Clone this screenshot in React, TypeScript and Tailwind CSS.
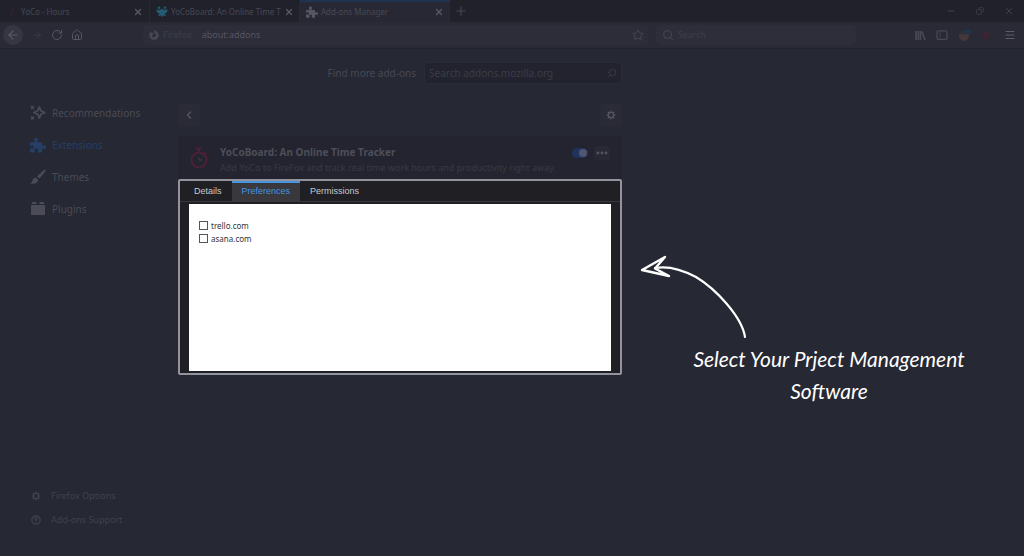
import { useState } from "react";
import type { ReactNode } from "react";
import {
  ArrowLeft,
  ArrowRight,
  ChevronLeft,
  CircleHelp,
  Copy,
  Ellipsis,
  House,
  Menu,
  Minus,
  Plus,
  RotateCw,
  Search,
  Star,
  X,
} from "lucide-react";
import { FaFirefoxBrowser } from "react-icons/fa";

function SparkleIcon() {
  return (
    <svg viewBox="0 0 16 16" className="w-4 h-4" fill="none" stroke="currentColor">
      <path
        d="M9.3 2 L11 5.8 L14.8 7.5 L11 9.2 L9.3 13 L7.6 9.2 L3.8 7.5 L7.6 5.8 Z"
        strokeWidth="1.8"
        strokeLinejoin="round"
      />
      <path d="M1 1l3 3M4 1L1 4M1 11.5l3 3M4 11.5l-3 3" strokeWidth="1.3" />
    </svg>
  );
}

function PuzzleIcon({ className }: { className: string }) {
  return (
    <svg viewBox="0 0 16 16" className={className} fill="currentColor">
      <path d="M1 5.2h3.2c.6 0 .8-.5.5-1C4.3 3.7 4 3.2 4 2.6 4 1.5 4.9.8 6 .8s2 .7 2 1.8c0 .6-.3 1.1-.7 1.6-.3.5-.1 1 .5 1H11a1 1 0 0 1 1 1v1.9c0 .6.5.8 1 .5.4-.3.8-.6 1.3-.6 1 0 1.7.9 1.7 2s-.7 2-1.7 2c-.5 0-.9-.3-1.3-.6-.5-.3-1-.1-1 .5v2.6a1 1 0 0 1-1 1H8.2c-.6 0-.8-.5-.5-1 .3-.4.5-.8.5-1.3 0-1-.9-1.6-1.9-1.6s-1.9.6-1.9 1.6c0 .5.2.9.5 1.3.3.5.1 1-.5 1H1a1 1 0 0 1-1-1v-2.7c0-.6.5-.8 1-.5.4.3.8.5 1.3.5 1 0 1.5-.8 1.5-1.7s-.5-1.7-1.5-1.7c-.5 0-.9.2-1.3.5-.5.3-1 .1-1-.5V6.2a1 1 0 0 1 1-1z" />
    </svg>
  );
}

function BrushIcon() {
  return (
    <svg viewBox="0 0 16 16" className="w-4 h-4" fill="currentColor">
      <path d="M15.3.6c.6.6.4 1.200 0 1.800L9.500 9.600 7.200 7.300 13.800.9c.6-.5 1.100-.7 1.500-.3z" />
      <path d="M5.900 8.600l2.200 2.100c.2 2.600-2.300 4.300-8 4 1.600-.9 2-1.800 2.400-3.300.4-1.700 1.800-2.800 3.400-2.800z" />
    </svg>
  );
}

function PluginIcon() {
  return (
    <svg viewBox="0 0 16 16" className="w-4 h-4" fill="currentColor">
      <path d="M2 1h4.500v2H2zM9.500 1H14v2H9.500zM1.500 4h13a.5.5 0 0 1 .5.5v9a.5.5 0 0 1-.5.5h-13a.5.5 0 0 1-.5-.5v-9a.5.5 0 0 1 .5-.5z" />
    </svg>
  );
}

function GearIcon({ className }: { className: string }) {
  return (
    <svg viewBox="0 0 16 16" className={className} fill="none" stroke="currentColor">
      <circle cx="8" cy="8" r="4.2" strokeWidth="2.2" />
      <path
        d="M8 .8v3M8 12.2v3M.8 8h3M12.2 8h3M2.9 2.9l2.1 2.1M11 11l2.1 2.1M2.9 13.1L5 11M11 5l2.1-2.1"
        strokeWidth="2"
      />
    </svg>
  );
}

function BoardIcon() {
  return (
    <svg viewBox="0 0 12 12" className="w-3 h-3 shrink-0 text-[#235b70]" fill="currentColor">
      <circle cx="3" cy="1.8" r="1.3" />
      <circle cx="9" cy="1.800" r="1.300" />
      <path d="M0 3.500l3 .5L6 3l3 1 3-.5L10.500 7 8.500 7.500 10 10 7 9.500 6 11.500 5 9.500 2 10l1.500-2.500-2-.5z" />
    </svg>
  );
}

function StopwatchIcon() {
  return (
    <svg
      viewBox="0 0 18 22"
      className="w-[18px] h-[22px] shrink-0 text-[#4c2137]"
      fill="none"
      stroke="currentColor"
    >
      <circle cx="9" cy="13" r="7.5" strokeWidth="2" />
      <path d="M6 1.5h6M9 2v3M14.5 5.5l1.5 1.5" strokeWidth="2" />
      <path d="M8 10l2 3.5 2.5-1" stroke="#3d3437" strokeWidth="1.5" />
    </svg>
  );
}

function LibraryIcon() {
  return (
    <svg viewBox="0 0 12 12" className="w-3 h-3" stroke="currentColor" strokeWidth="1.7">
      <path d="M2 2v9M4.3 2v9M6.5 2v9M8 2.5l3 8.5" />
    </svg>
  );
}

function SidebarIcon() {
  return (
    <svg viewBox="0 0 12 12" className="w-3 h-3" fill="none" stroke="currentColor">
      <rect x="1" y="1.8" width="10" height="8.5" rx="1.2" strokeWidth="1.3" />
      <path d="M3 4h2M3 6h2M3 8h2" strokeWidth=".9" />
    </svg>
  );
}

function AvatarIcon() {
  return (
    <svg viewBox="0 0 14 14" className="w-3.5 h-3.5">
      <circle cx="6" cy="8" r="5" fill="#44383a" />
      <path d="M1.5 6.5a4.5 4.5 0 0 1 9 0z" fill="#30323b" />
      <circle cx="10.5" cy="3.5" r="2.8" fill="#1d3551" />
    </svg>
  );
}

function HandArrow() {
  return (
    <svg
      viewBox="0 0 108 84"
      className="w-[108px] h-[84px]"
      fill="none"
      stroke="#fff"
      strokeLinecap="round"
      strokeLinejoin="round"
      aria-hidden="true"
    >
      <path d="M25 2 L2 15 L29 21 L15 13.5 Z" strokeWidth="2.4" />
      <path d="M15 13 C26 11 41 14 56 22 C76 34 102 62 105 82" strokeWidth="2.2" />
    </svg>
  );
}

type TabProps = {
  icon: ReactNode;
  title: string;
  active?: boolean;
};

function BrowserTab({ icon, title, active }: TabProps) {
  return (
    <div
      className={
        active
          ? "flex items-center gap-[3px] w-[150px] h-full px-1.5 border-t-2 border-[#22334f] bg-[#272833]"
          : "flex items-center gap-[3px] w-[150px] h-full px-1.5 border-t-2 border-transparent border-r border-r-[#292a35]"
      }
    >
      {icon}
      <span className="flex-1 whitespace-nowrap text-[8px]">{title}</span>
      <button aria-label={`Close ${title}`}>
        <X className="w-2.5 h-2.5 text-[#5a5b66]" strokeWidth={3} />
      </button>
    </div>
  );
}

const categories = [
  { name: "Recommendations", icon: <SparkleIcon /> },
  { name: "Extensions", icon: <PuzzleIcon className="w-4 h-4" /> },
  { name: "Themes", icon: <BrushIcon /> },
  { name: "Plugins", icon: <PluginIcon /> },
];

const detailTabs = ["Details", "Preferences", "Permissions"];
const sites = ["trello.com", "asana.com"];

function App() {
  const [tab, setTab] = useState("Preferences");
  const [enabled, setEnabled] = useState(true);

  return (
    <div className="flex flex-col min-h-screen bg-[#262833] text-[#474853] font-['Noto_Sans','Open_Sans',sans-serif]">
      <header>
        <div className="flex items-center h-[22px] bg-[#21212c]">
          <BrowserTab
            icon={<span className="w-3 text-center text-[9px] leading-none text-[#482034]">/</span>}
            title="YoCo - Hours"
          />
          <BrowserTab icon={<BoardIcon />} title="YoCoBoard: An Online Time T" />
          <BrowserTab
            icon={<PuzzleIcon className="w-3 h-3 shrink-0 text-[#565762]" />}
            title="Add-ons Manager"
            active
          />
          <button className="px-1" aria-label="New tab">
            <Plus className="w-3.5 h-3.5" />
          </button>
          <div className="flex items-center gap-5 ml-auto pr-2.5">
            <button aria-label="Minimize">
              <Minus className="w-2.5 h-2.5" />
            </button>
            <button aria-label="Restore">
              <Copy className="w-2 h-2 -scale-x-100" />
            </button>
            <button aria-label="Close window">
              <X className="w-2.5 h-2.5" />
            </button>
          </div>
        </div>

        <div className="flex items-center h-[27px] pl-[3px] pr-2 bg-[#292a35] border-b border-[#21222c]">
          <div className="flex items-center gap-2 w-[140px] shrink-0">
            <button
              className="flex items-center justify-center w-5 h-5 rounded-full bg-[#353641] text-[#5a5b66]"
              aria-label="Back"
            >
              <ArrowLeft className="w-3.5 h-3.5" />
            </button>
            <button className="text-[#393a45]" aria-label="Forward">
              <ArrowRight className="w-3 h-3" />
            </button>
            <button className="text-[#555661]" aria-label="Reload">
              <RotateCw className="w-3 h-3" />
            </button>
            <button className="text-[#555661]" aria-label="Home">
              <House className="w-3 h-3" />
            </button>
          </div>
          <div className="flex flex-[512] items-center gap-1 h-5 pl-1.5 pr-1 rounded-sm bg-[#2c2d38] text-[9px]">
            <FaFirefoxBrowser className="w-2.5 h-2.5" />
            <span className="text-[#3d3e49]">Firefox</span>
            <input
              className="flex-1 min-w-0 ml-1.5 bg-transparent text-[#555661] outline-none"
              aria-label="Address"
              defaultValue="about:addons"
            />
            <button aria-label="Bookmark">
              <Star className="w-3 h-3" />
            </button>
          </div>
          <label className="flex flex-[195] items-center gap-1 h-5 ml-2 px-1.5 rounded-sm bg-[#2d2e39] text-[9px]">
            <Search className="w-3 h-3" />
            <input
              className="flex-1 min-w-0 bg-transparent placeholder:text-[#3d3e49] outline-none"
              aria-label="Search the web"
              placeholder="Search"
            />
          </label>
          <div className="flex items-center gap-2.5 pl-[58px]">
            <button aria-label="Library">
              <LibraryIcon />
            </button>
            <button aria-label="Sidebars">
              <SidebarIcon />
            </button>
            <button aria-label="Account">
              <AvatarIcon />
            </button>
            <button className="w-2 h-2 rounded-full bg-[#3a2532]" aria-label="YoCoBoard" />
            <button className="ml-1" aria-label="Menu">
              <Menu className="w-3 h-3 text-[#5a5b66]" />
            </button>
          </div>
        </div>
      </header>

      <div className="flex-1 grid grid-cols-[178px_minmax(0,444fr)_minmax(0,402fr)]">
        <aside className="flex flex-col justify-between pt-12 pb-6 pl-[30px]">
          <nav>
            {categories.map((c) => (
              <a
                key={c.name}
                href="#"
                className={
                  c.name === "Extensions"
                    ? "flex items-center gap-1.5 h-8 text-[10px] text-[#253f66]"
                    : "flex items-center gap-1.5 h-8 text-[10px] text-[#4a4b56]"
                }
              >
                {c.icon}
                {c.name}
              </a>
            ))}
          </nav>
          <div className="text-[9px] text-[#41424d]">
            <a href="#" className="flex items-center gap-2.5 h-6 pl-px">
              <GearIcon className="w-2.5 h-2.5" />
              Firefox Options
            </a>
            <a href="#" className="flex items-center gap-2.5 h-6 pl-px">
              <CircleHelp className="w-2.5 h-2.5" strokeWidth={3} />
              Add-ons Support
            </a>
          </div>
        </aside>

        <main className="pt-[13px]">
          <div className="flex items-center justify-end gap-2">
            <label htmlFor="addon-search" className="text-[10px]">
              Find more add-ons
            </label>
            <div className="flex items-center w-[198px] h-[22px] px-1 border border-[#2a2b36] rounded-sm bg-[#22232e]">
              <input
                id="addon-search"
                className="flex-1 min-w-0 bg-transparent text-[10px] placeholder:text-[#3b3c47] outline-none"
                placeholder="Search addons.mozilla.org"
              />
              <Search className="w-2.5 h-2.5 -scale-x-100 text-[#3b3c47]" />
            </div>
          </div>

          <div className="flex items-center justify-between mt-5">
            <button
              className="flex items-center justify-center w-[22px] h-[22px] rounded-sm bg-[#2a2b36] text-[#555661]"
              aria-label="Go back"
            >
              <ChevronLeft className="w-3 h-3" strokeWidth={3} />
            </button>
            <button
              className="flex items-center justify-center w-[22px] h-[22px] rounded-sm bg-[#2a2b36] text-[#555661]"
              aria-label="Tools for all add-ons"
            >
              <GearIcon className="w-2.5 h-2.5" />
            </button>
          </div>

          <section className="mt-2.5 bg-[#23242f]">
            <div className="flex items-center gap-3 h-[43px] px-3">
              <StopwatchIcon />
              <div className="flex-1 min-w-0 pt-1">
                <div className="flex items-center justify-between h-4">
                  <h1 className="text-[10px] font-bold text-[#4d4e59]">
                    YoCoBoard: An Online Time Tracker
                  </h1>
                  <div className="flex items-center gap-1.5">
                    <label className="flex items-center justify-end w-4 h-2.5 p-px rounded-full bg-[#1f335c]">
                      <input
                        type="checkbox"
                        className="sr-only"
                        aria-label="Enable YoCoBoard"
                        checked={enabled}
                        onChange={() => setEnabled(!enabled)}
                      />
                      <span className="w-2 h-2 rounded-full bg-[#50566f]" />
                    </label>
                    <button
                      className="flex items-center justify-center w-4 h-3.5 rounded-sm bg-[#282934] text-[#555661]"
                      aria-label="More options"
                    >
                      <Ellipsis className="w-3.5 h-3.5" strokeWidth={3} />
                    </button>
                  </div>
                </div>
                <p className="h-3.5 text-[9px] leading-[14px] whitespace-nowrap text-[#393a45]">
                  Add YoCo to FireFox and track real time work hours and productivity right away.
                </p>
              </div>
            </div>

            <div className="border-2 border-[#92939c] rounded-xs bg-[#202024] font-['Liberation_Sans',Arial,sans-serif]">
              <div className="flex h-[21px] px-1 border-b border-[#38383d]">
                {detailTabs.map((t) => (
                  <button
                    key={t}
                    onClick={() => setTab(t)}
                    className={
                      t === tab
                        ? "px-2.5 border-t-2 border-[#4595e0] bg-[#38383d] text-[9px] text-[#4595e0]"
                        : "px-2.5 border-t-2 border-transparent text-[9px] text-[#c8c8cc]"
                    }
                  >
                    {t}
                  </button>
                ))}
              </div>
              <div className="h-[167px] mx-[9px] my-0.5 px-2.5 py-[15px] bg-white text-[#333] font-['Noto_Sans','Open_Sans',sans-serif]">
                {sites.map((site) => (
                  <label key={site} className="flex items-center gap-[3px] h-[13px] text-[8px]">
                    <input
                      type="checkbox"
                      className="w-[9px] h-[9px] appearance-none border border-[#555] bg-white checked:bg-[#4595e0]"
                    />
                    {site}
                  </label>
                ))}
              </div>
            </div>
          </section>
        </main>

        <aside className="pt-[206px] pl-[18px] pr-1.5">
          <HandArrow />
          <p className="mt-1 text-center text-[21px] leading-8 text-white font-['Segoe_Script','Bradley_Hand','Lato',cursive] italic">
            Select Your Prject Management
            <br />
            Software
          </p>
        </aside>
      </div>
    </div>
  );
}

export default App;
